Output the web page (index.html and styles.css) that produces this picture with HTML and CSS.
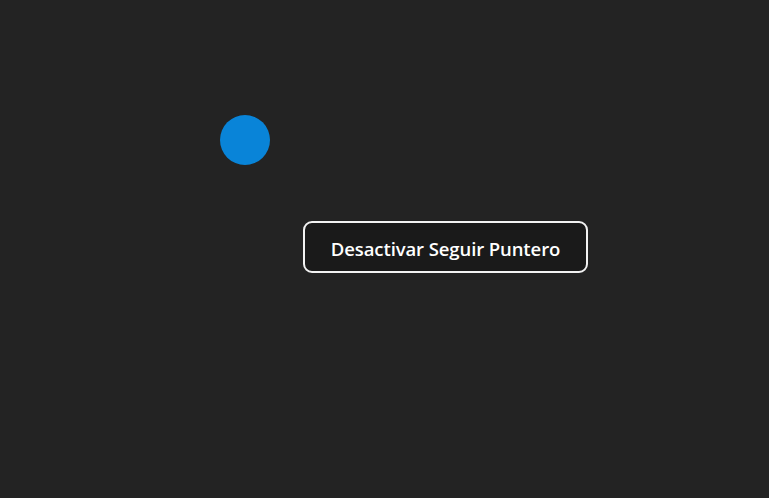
FILE: index.html
```html
<!DOCTYPE html>
<html lang="es">
<head>
<meta charset="utf-8">
<link rel="stylesheet" href="styles.css">
</head>
<body>
<div class="stage">
  <div class="pointer-dot"></div>
  <button class="toggle-btn">Desactivar Seguir Puntero</button>
</div>
</body>
</html>
```
FILE: styles.css
```css
html, body {
  margin: 0;
  padding: 0;
  background: #232323;
  width: 100%;
  height: 100%;
  overflow: hidden;
}
.stage {
  position: relative;
  width: 769px;
  height: 498px;
  padding: 221px 0 0 303px;
  box-sizing: border-box;
}
.pointer-dot {
  position: absolute;
  left: 220px;
  top: 115px;
  width: 50px;
  height: 50px;
  border-radius: 50%;
  background: #0984d8;
}
.toggle-btn {
  display: inline-flex;
  align-items: center;
  justify-content: center;
  box-sizing: border-box;
  height: 52px;
  width: 285px;
  padding: 2px 10px 0;
  background: #1a1a1a;
  color: #ffffff;
  border: 2px solid #f2f2f2;
  border-radius: 9px;
  font-family: "Open Sans", "Noto Sans", sans-serif;
  font-weight: 600;
  font-size: 18.5px;
  letter-spacing: -0.1px;
  cursor: pointer;
}
```
